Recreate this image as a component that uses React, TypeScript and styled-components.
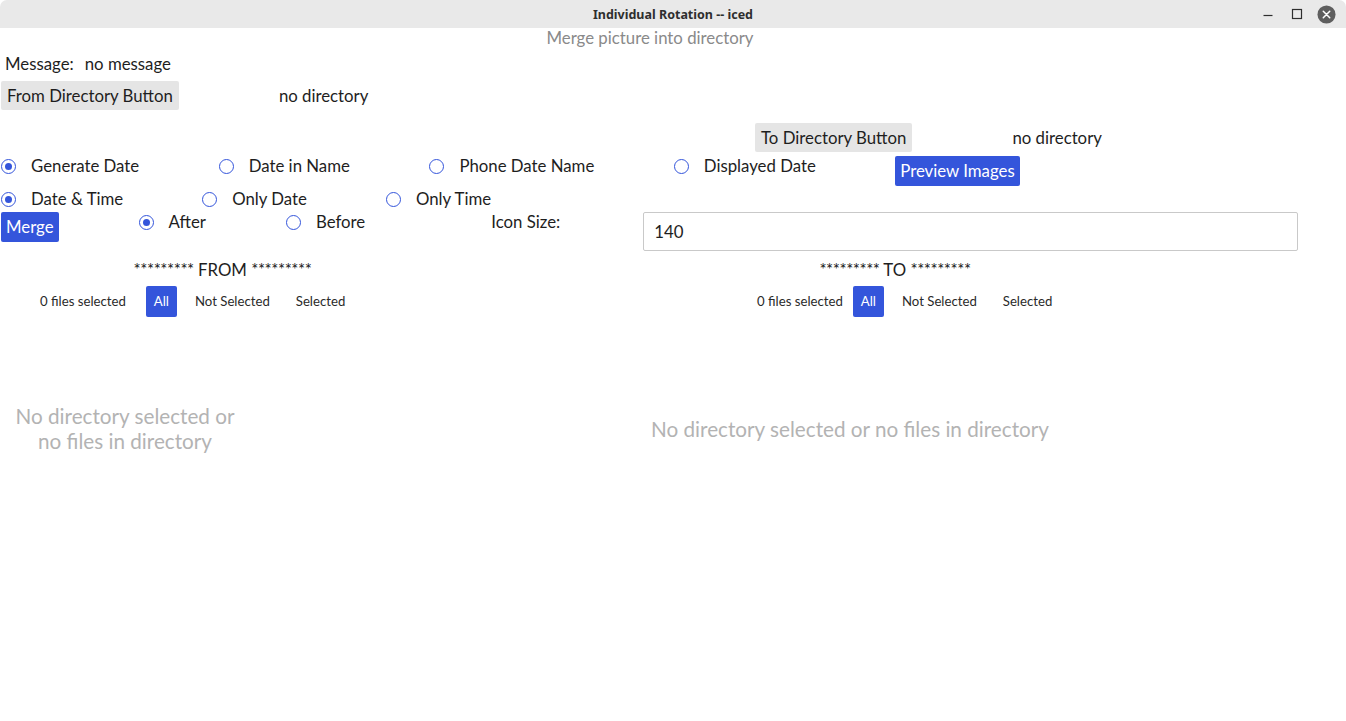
import styled, { createGlobalStyle } from "styled-components"

const GlobalStyle = createGlobalStyle`
    html, body {
        margin: 0;
        padding: 0;
        background: #ffffff;
    }
    body {
        font-family: Lato, "Noto Sans", sans-serif;
        color: #1e1e1e;
    }
`

const Window = styled.div`
    width: 1346px;
    height: 721px;
    display: flex;
    flex-direction: column;
    overflow: hidden;
    background: #ffffff;
`

const TitleBar = styled.header`
    flex: none;
    height: 28px;
    display: grid;
    grid-template-columns: 1fr auto 1fr;
    align-items: center;
    background: #e9e9e9;
    border-radius: 7px 7px 0 0;
`

const Title = styled.div`
    grid-column: 2;
    font-family: "Noto Sans", "DejaVu Sans", sans-serif;
    font-weight: 700;
    font-size: 12.5px;
    color: #2e2e2e;
`

const Controls = styled.div`
    justify-self: end;
    display: flex;
    align-items: center;
    gap: 9px;
    padding-right: 10px;
`

const ControlBox = styled.div`
    width: 20px;
    height: 20px;
    display: flex;
    align-items: center;
    justify-content: center;
`

const Content = styled.main`
    flex: 1;
    display: flex;
    flex-direction: column;
    padding-left: 1px;
    font-size: 16.8px;
    line-height: 20px;
`

const Heading = styled.div`
    width: 1298px;
    text-align: center;
    color: #8a8a8a;
`

const Row = styled.div<{ $gap: number; $top: number; $indent?: number }>`
    display: flex;
    align-items: flex-start;
    gap: ${(p) => p.$gap}px;
    margin-top: ${(p) => p.$top}px;
    padding-left: ${(p) => p.$indent ?? 0}px;
`

const Text = styled.span<{ $tall?: boolean }>`
    white-space: nowrap;
    line-height: ${(p) => (p.$tall ? "30px" : "20px")};
`

const GreyButton = styled.button`
    font: inherit;
    line-height: 20px;
    padding: 5px 6px 4px;
    border: none;
    border-radius: 2px;
    background: #e5e5e5;
    color: #1e1e1e;
    white-space: nowrap;
`

const BlueButton = styled.button`
    font: inherit;
    line-height: 20px;
    padding: 5px 5px;
    border: none;
    border-radius: 2px;
    background: #3455db;
    color: #ffffff;
    white-space: nowrap;
`

const RadioItem = styled.label`
    display: flex;
    align-items: center;
    gap: 15px;
    height: 20px;
    white-space: nowrap;
`

const RadioCircle = styled.span<{ $on?: boolean }>`
    width: 15px;
    height: 15px;
    box-sizing: border-box;
    border: 1px solid #3455db;
    border-radius: 50%;
    display: flex;
    align-items: center;
    justify-content: center;

    &::after {
        content: "";
        width: 7px;
        height: 7px;
        border-radius: 50%;
        background: ${(p) => (p.$on ? "#3455db" : "transparent")};
    }
`

const IconLabel = styled.span`
    margin-left: 46px;
    white-space: nowrap;
`

const SizeInput = styled.input`
    margin-left: 3px;
    width: 655px;
    height: 39px;
    box-sizing: border-box;
    border: 1px solid #c9c9c9;
    border-radius: 2px;
    padding: 0 10px;
    font: inherit;
    color: #1e1e1e;
    outline: none;
`

const Columns = styled.div`
    display: flex;
    margin-top: 8px;
`

const Column = styled.section<{ $width: number }>`
    width: ${(p) => p.$width}px;
    flex: none;
    display: flex;
    flex-direction: column;
`

const SideTitle = styled.div`
    text-align: center;
    line-height: 20px;
    padding-top: 1px;
`

const Stars = styled.span`
    letter-spacing: -0.45px;
`

const FilesBar = styled.div<{ $indent: number; $labelGap: number }>`
    display: flex;
    align-items: center;
    gap: 10px;
    margin-top: 6px;
    padding-left: ${(p) => p.$indent}px;
    font-size: 13.2px;
    line-height: 15px;
    color: #2a2a2a;

    & > span {
        margin-right: ${(p) => p.$labelGap - 10}px;
    }
`

const FilterButton = styled.button<{ $active?: boolean }>`
    font: inherit;
    line-height: 15px;
    padding: 8px 8px;
    border: none;
    border-radius: 2px;
    background: ${(p) => (p.$active ? "#3455db" : "transparent")};
    color: ${(p) => (p.$active ? "#ffffff" : "#2a2a2a")};
    white-space: nowrap;
`

const EmptyArea = styled.div`
    height: 224px;
    display: flex;
    align-items: center;
`

const EmptyText = styled.div<{ $width: number; $offset?: number }>`
    width: ${(p) => p.$width}px;
    margin-left: ${(p) => p.$offset ?? 0}px;
    text-align: center;
    font-size: 20.7px;
    line-height: 25px;
    color: #b3b3b3;
`

const Radio = ({ label, on }: { label: string; on?: boolean }) => (
    <RadioItem>
        <RadioCircle $on={on} />
        <span>{label}</span>
    </RadioItem>
)

const FileFilter = ({ indent, labelGap }: { indent: number; labelGap: number }) => (
    <FilesBar $indent={indent} $labelGap={labelGap}>
        <span>0 files selected</span>
        <FilterButton $active>All</FilterButton>
        <FilterButton>Not Selected</FilterButton>
        <FilterButton>Selected</FilterButton>
    </FilesBar>
)

const App = () => {
    return (
        <>
            <GlobalStyle />
            <Window>
                <TitleBar>
                    <Title>Individual Rotation -- iced</Title>
                    <Controls>
                        <ControlBox>
                            <svg width="20" height="20" viewBox="0 0 20 20">
                                <line x1="5.5" y1="11.5" x2="14.5" y2="11.5" stroke="#2e2e2e" strokeWidth="1.2" />
                            </svg>
                        </ControlBox>
                        <ControlBox>
                            <svg width="20" height="20" viewBox="0 0 20 20">
                                <rect x="5.5" y="5.5" width="9" height="9" fill="none" stroke="#2e2e2e" strokeWidth="1.2" />
                            </svg>
                        </ControlBox>
                        <ControlBox>
                            <svg width="19" height="19" viewBox="0 0 20 20">
                                <circle cx="10" cy="10" r="9.5" fill="#5e5e5e" />
                                <path d="M6.6 6.6 L13.4 13.4 M13.4 6.6 L6.6 13.4" stroke="#ffffff" strokeWidth="1.6" strokeLinecap="round" />
                            </svg>
                        </ControlBox>
                    </Controls>
                </TitleBar>

                <Content>
                    <Heading>Merge picture into directory</Heading>

                    <Row $gap={11} $top={6} $indent={4}>
                        <Text>Message:</Text>
                        <Text>no message</Text>
                    </Row>

                    <Row $gap={100} $top={7}>
                        <GreyButton>From Directory Button</GreyButton>
                        <Text $tall>no directory</Text>
                    </Row>

                    <Row $gap={100} $top={12} $indent={754}>
                        <GreyButton>To Directory Button</GreyButton>
                        <Text $tall>no directory</Text>
                    </Row>

                    <Row $gap={79.5} $top={3}>
                        <Radio label="Generate Date" on />
                        <Radio label="Date in Name" />
                        <Radio label="Phone Date Name" />
                        <Radio label="Displayed Date" />
                        <BlueButton>Preview Images</BlueButton>
                    </Row>

                    <Row $gap={79} $top={3}>
                        <Radio label="Date & Time" on />
                        <Radio label="Only Date" />
                        <Radio label="Only Time" />
                    </Row>

                    <Row $gap={80} $top={3}>
                        <BlueButton>Merge</BlueButton>
                        <Radio label="After" on />
                        <Radio label="Before" />
                        <IconLabel>Icon Size:</IconLabel>
                        <SizeInput defaultValue="140" />
                    </Row>

                    <Columns>
                        <Column $width={443}>
                            <SideTitle>
                                <Stars>*********</Stars> FROM <Stars>*********</Stars>
                            </SideTitle>
                            <FileFilter indent={39} labelGap={20} />
                            <EmptyArea>
                                <EmptyText $width={236} $offset={6}>No directory selected or no files in directory</EmptyText>
                            </EmptyArea>
                        </Column>
                        <Column $width={902}>
                            <SideTitle>
                                <Stars>*********</Stars> TO <Stars>*********</Stars>
                            </SideTitle>
                            <FileFilter indent={313} labelGap={10} />
                            <EmptyArea>
                                <EmptyText $width={812}>No directory selected or no files in directory</EmptyText>
                            </EmptyArea>
                        </Column>
                    </Columns>
                </Content>
            </Window>
        </>
    )
}

export default App
